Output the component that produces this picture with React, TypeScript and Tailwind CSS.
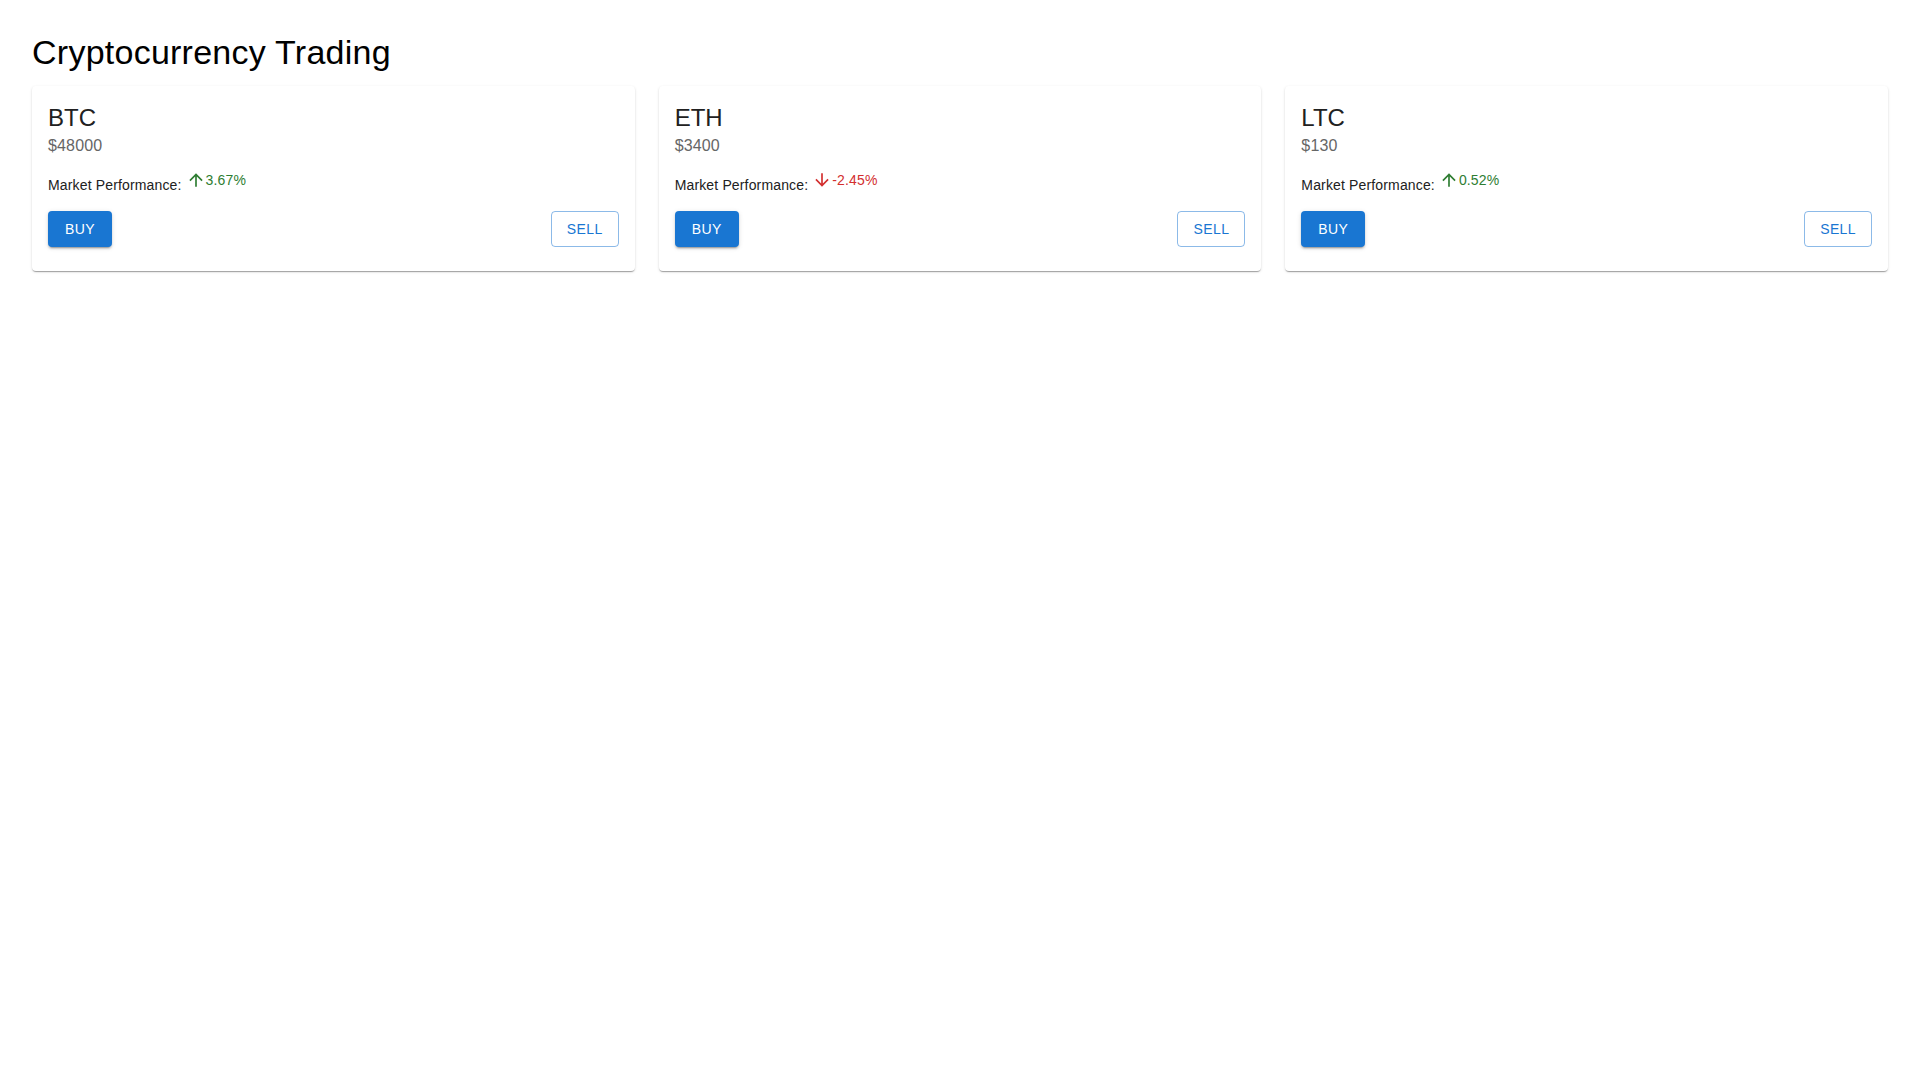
import React from "react";

type Coin = { symbol: string; price: number; change: number };

const coins: Coin[] = [
  { symbol: "BTC", price: 48000, change: 3.67 },
  { symbol: "ETH", price: 3400, change: -2.45 },
  { symbol: "LTC", price: 130, change: 0.52 },
];

const ArrowUp = () => (
  <svg viewBox="0 0 24 24" className="w-5 h-5 fill-current">
    <path d="M4 12l1.41 1.41L11 7.83V20h2V7.83l5.58 5.59L20 12l-8-8-8 8z" />
  </svg>
);

const ArrowDown = () => (
  <svg viewBox="0 0 24 24" className="w-5 h-5 fill-current">
    <path d="M20 12l-1.41-1.41L13 16.17V4h-2v12.17l-5.58-5.59L4 12l8 8 8-8z" />
  </svg>
);

const CoinCard = ({ coin }: { coin: Coin }) => {
  const up = coin.change >= 0;
  return (
    <div className="bg-white rounded px-4 pt-4 pb-6 shadow-[0px_2px_1px_-1px_rgba(0,0,0,0.2),0px_1px_1px_0px_rgba(0,0,0,0.14),0px_1px_3px_0px_rgba(0,0,0,0.12)]">
      <div className="text-[24px] leading-[32px] text-[#212121]">{coin.symbol}</div>
      <div className="text-[16px] leading-[24px] tracking-[0.15px] text-[#666666]">
        ${coin.price}
      </div>

      <div className="flex items-start mt-3">
        <span className="mt-[5px] text-[14px] leading-5 tracking-[0.15px] text-[#212121]">
          Market Performance:
        </span>
        <span
          className={
            "inline-flex items-center ml-1 text-[14px] leading-5 tracking-[0.15px] " +
            (up ? "text-[#2e7d32]" : "text-[#d32f2f]")
          }
        >
          {up ? <ArrowUp /> : <ArrowDown />}
          {coin.change}%
        </span>
      </div>

      <div className="flex items-center justify-between mt-4">
        <button className="h-9 min-w-16 px-4 rounded bg-[#1976d2] text-white text-[14px] uppercase tracking-[0.4px] shadow-[0px_3px_1px_-2px_rgba(0,0,0,0.2),0px_2px_2px_0px_rgba(0,0,0,0.14),0px_1px_5px_0px_rgba(0,0,0,0.12)]">
          Buy
        </button>
        <button className="h-9 min-w-16 px-[15px] rounded border border-[rgba(25,118,210,0.5)] text-[#1976d2] text-[14px] uppercase tracking-[0.4px]">
          Sell
        </button>
      </div>
    </div>
  );
};

export default function App() {
  return (
    <div
      className="min-h-screen bg-white px-8 pt-[31px]"
      style={{ fontFamily: '"Liberation Sans", Arial, sans-serif' }}
    >
      <h1 className="text-[34px] leading-[42px] tracking-[0.25px] text-black mb-[13px]">
        Cryptocurrency Trading
      </h1>
      <div className="grid grid-cols-3 gap-6">
        {coins.map((c) => (
          <CoinCard key={c.symbol} coin={c} />
        ))}
      </div>
    </div>
  );
}
